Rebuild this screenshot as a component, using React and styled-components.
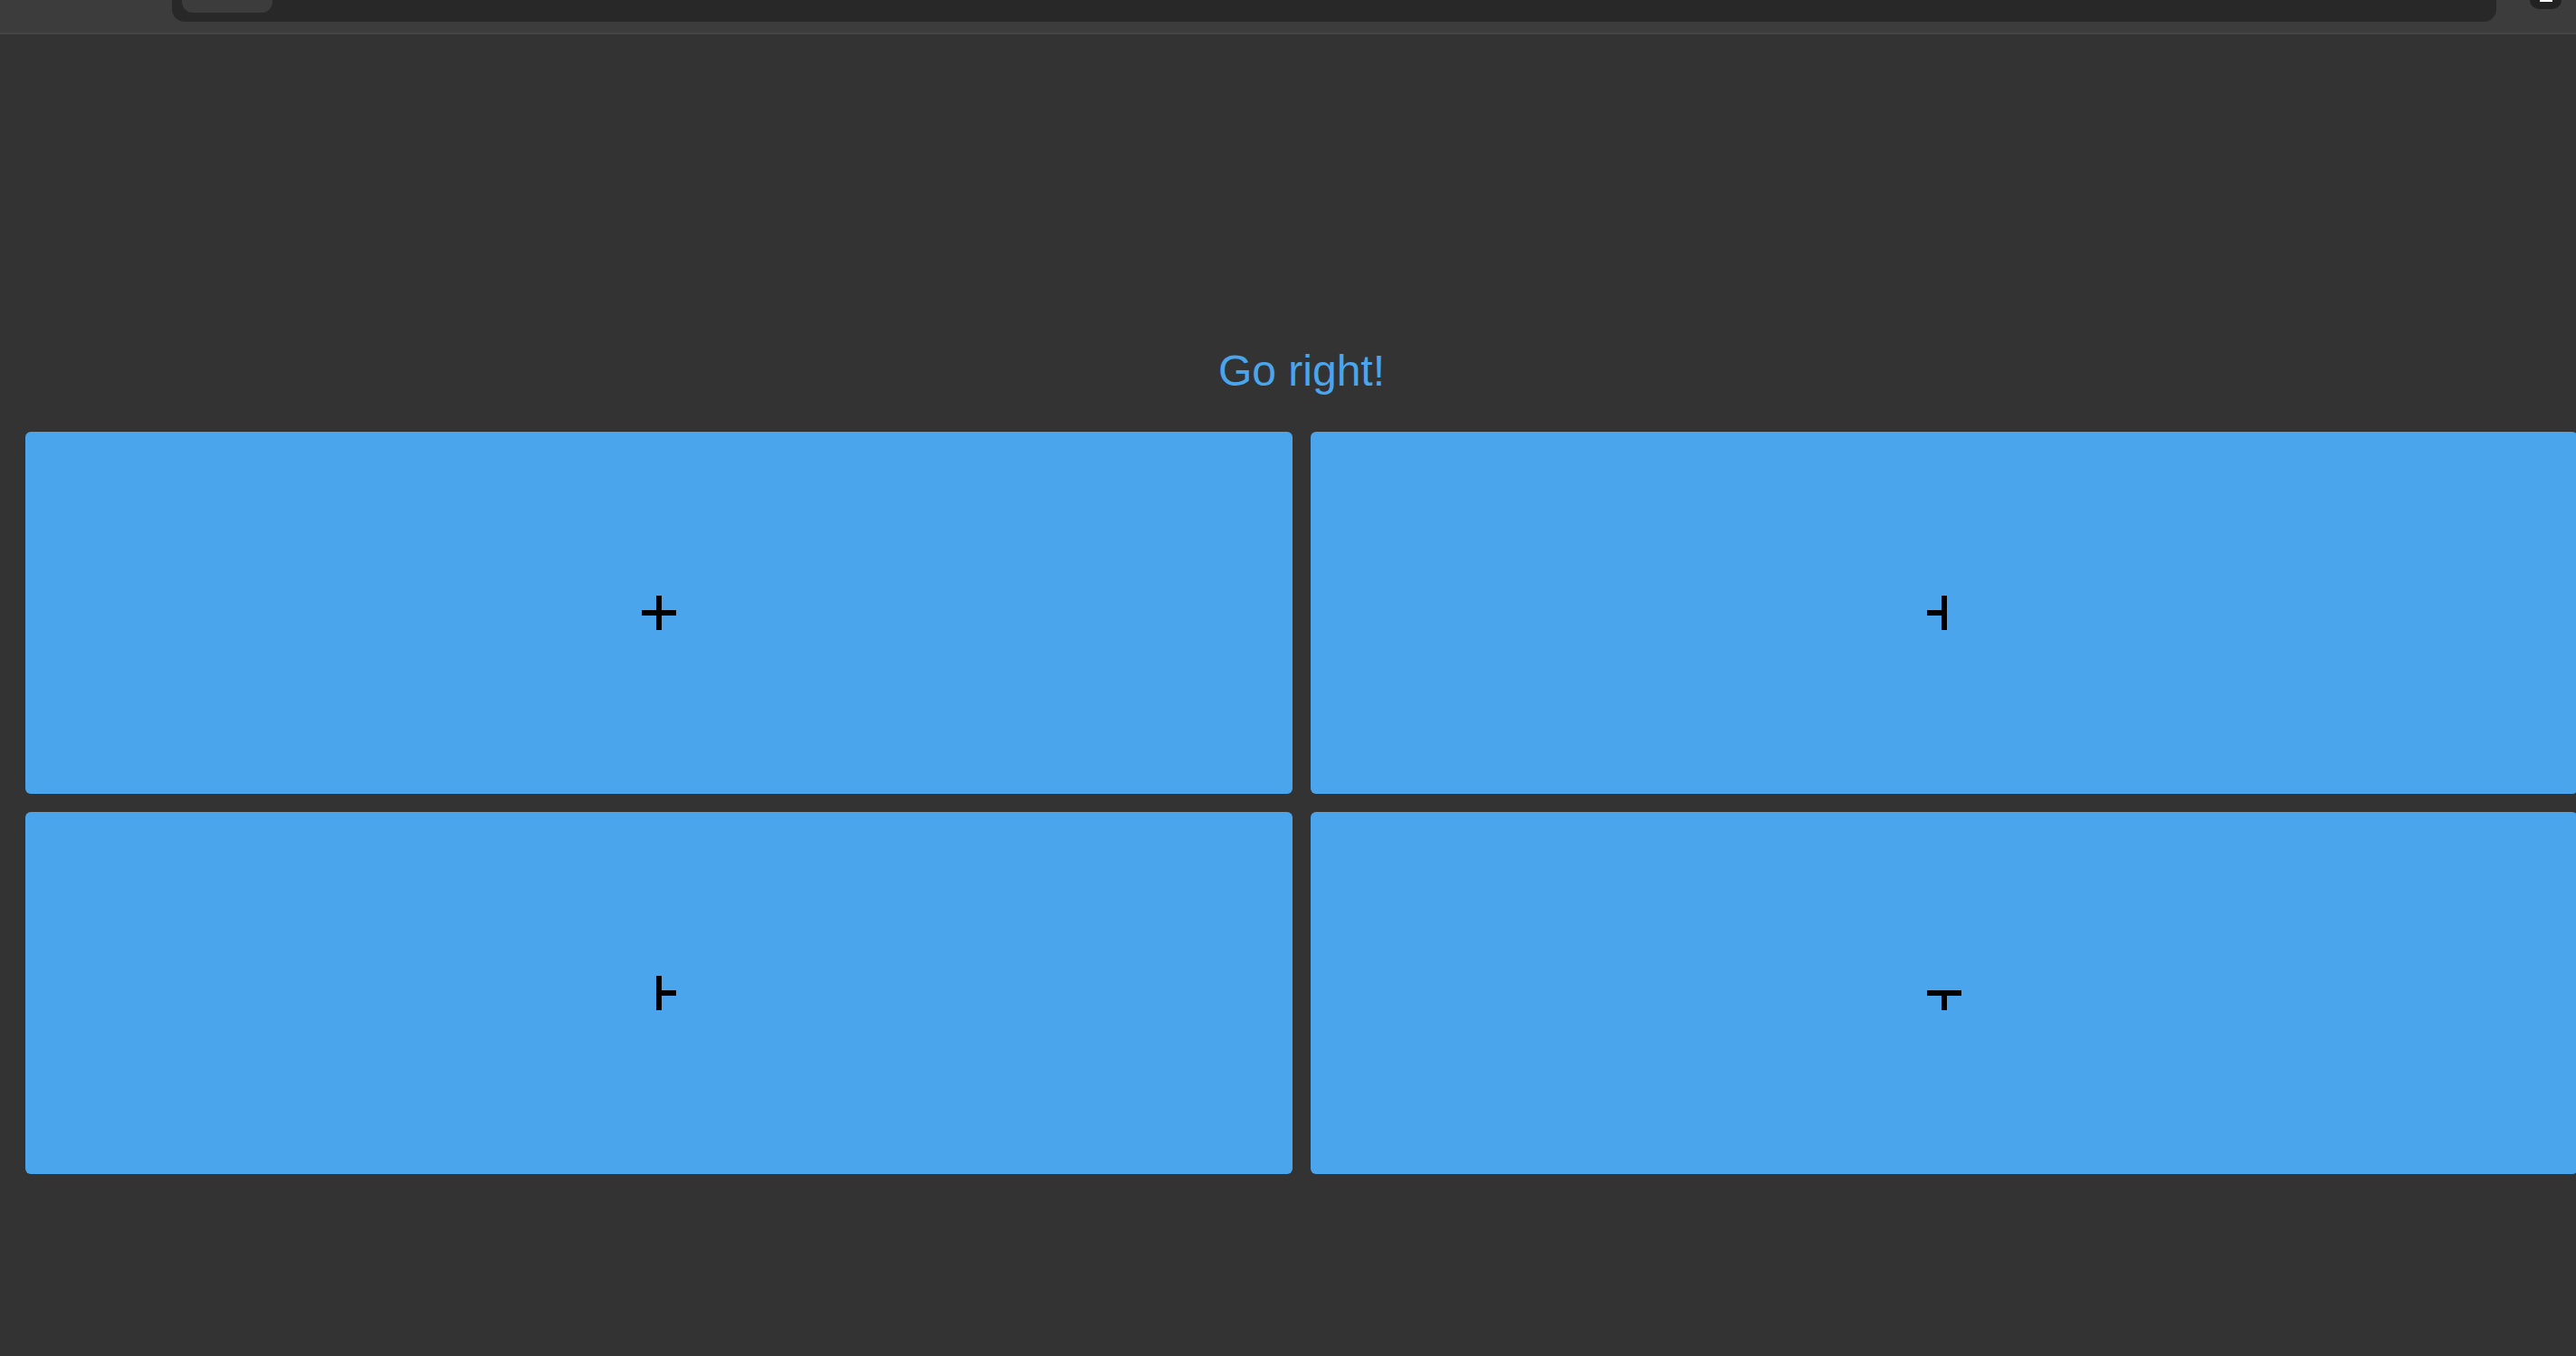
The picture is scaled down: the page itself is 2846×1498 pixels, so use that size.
import { createGlobalStyle, styled } from "styled-components";

const GlobalStyle = createGlobalStyle`
  html, body {
    margin: 0;
    padding: 0;
    background: #333333;
    overflow: hidden;
    font-family: "Liberation Sans", Arial, sans-serif;
  }
`;

// browser chrome strip at the top of the screenshot
const Chrome = styled.div`
  height: 36px;
  background: #3c3c3c;
  border-bottom: 2px solid #454545;
  display: flex;
  align-items: flex-start;
`;

const UrlPill = styled.div`
  margin-left: 190px;
  width: 2568px;
  height: 24px;
  background: #282828;
  border-radius: 0 0 14px 14px;
  display: flex;
  align-items: flex-start;
  padding-left: 11px;
  box-sizing: border-box;
`;

const SiteChip = styled.div`
  width: 100px;
  height: 14px;
  background: #3c3c3c;
  border-radius: 0 0 12px 12px;
`;

const Avatar = styled.div`
  margin-left: 37px;
  width: 35px;
  height: 10px;
  background: #222222;
  border-radius: 0 0 18px 18px;
  display: flex;
  justify-content: center;
  &::after {
    content: "";
    width: 14px;
    height: 2px;
    background: #ffffff;
  }
`;

const Page = styled.div`
  width: 2820px;
  padding: 344px 0 0 28px;
`;

const Title = styled.h1`
  margin: 0 0 40px;
  font-size: 48px;
  font-weight: normal;
  line-height: 55px;
  text-align: center;
  color: #4aa5ec;
`;

const Grid = styled.div`
  display: grid;
  grid-template-columns: 1400px 1400px;
  grid-auto-rows: 400px;
  gap: 20px;
`;

const Card = styled.div`
  background: #4aa5ec;
  border-radius: 6px;
  display: flex;
  align-items: center;
  justify-content: center;
`;

const Mark = styled.svg`
  display: block;
  width: 38px;
  height: 38px;
`;

// arms: which of up / right / down / left are drawn from the centre
const Cross = ({ arms }) => (
  <Mark viewBox="0 0 38 38">
    {arms.includes("up") && <rect x="16" y="0" width="6" height="22" />}
    {arms.includes("down") && <rect x="16" y="16" width="6" height="22" />}
    {arms.includes("left") && <rect x="0" y="16" width="22" height="6" />}
    {arms.includes("right") && <rect x="16" y="16" width="22" height="6" />}
  </Mark>
);

const cells = [
  ["up", "right", "down", "left"],
  ["up", "down", "left"],
  ["up", "right", "down"],
  ["right", "down", "left"],
];

const App = () => {
  return (
    <>
      <GlobalStyle />
      <Chrome>
        <UrlPill>
          <SiteChip />
        </UrlPill>
        <Avatar />
      </Chrome>
      <Page>
        <Title>Go right!</Title>
        <Grid>
          {cells.map((arms, i) => (
            <Card key={i}>
              <Cross arms={arms} />
            </Card>
          ))}
        </Grid>
      </Page>
    </>
  );
};

export default App;
